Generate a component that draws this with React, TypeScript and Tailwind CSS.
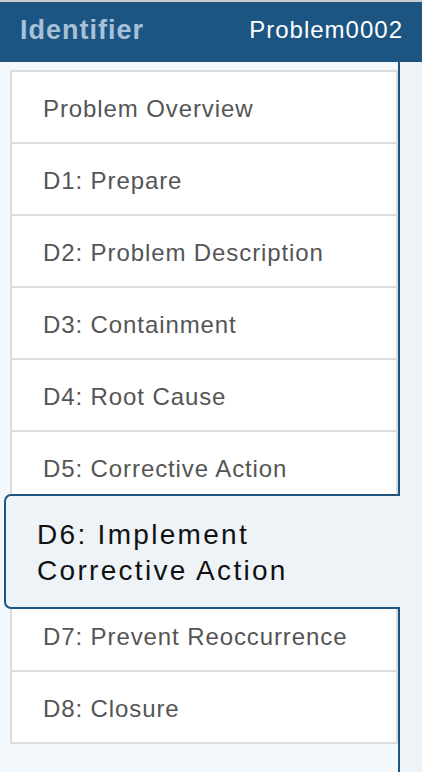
import React from "react";

const rowsTop = [
  "Problem Overview",
  "D1: Prepare",
  "D2: Problem Description",
  "D3: Containment",
  "D4: Root Cause",
  "D5: Corrective Action",
];
const rowsBottom = ["D7: Prevent Reoccurrence", "D8: Closure"];

function Row({ label, first }: { label: string; first?: boolean }) {
  return (
    <div
      className={
        "h-[72px] bg-white border-x-2 border-b-2 border-[#dcdcdc] flex items-center pl-[31px] pt-[3px] text-[24px] tracking-[0.9px] text-[#555555] " +
        (first ? "border-t-2 h-[74px]" : "")
      }
    >
      {label}
    </div>
  );
}

export default function App() {
  return (
    <div
      className="w-[422px] h-[772px] bg-[#eef3f7] overflow-hidden flex flex-col"
      style={{ fontFamily: '"Liberation Sans", Arial, sans-serif' }}
    >
      <div className="h-[62px] shrink-0 bg-[#1c5582] border-t-2 border-[#c9ced3] flex items-center justify-between pl-[20px] pr-[19px] pb-[4px]">
        <span className="text-[27px] font-bold tracking-[1px] text-[#a7c1d9]">
          Identifier
        </span>
        <span className="text-[24px] text-white tracking-[1px]">Problem0002</span>
      </div>
      <div className="flex-1 flex">
        <div className="w-[400px] bg-[#f2f8fc] border-r-2 border-[#1d5580] pt-[8px] pl-[10px] flex flex-col">
          {rowsTop.map((r, i) => (
            <Row key={r} label={r} first={i === 0} />
          ))}
          <div className="relative z-10 -mt-[10px] -mb-[9px] -ml-[6px] w-[396px] h-[115px] bg-[#eef3f8] border-l-2 border-y-2 border-[#1d5580] rounded-l-[7px] flex flex-col justify-center pl-[31px] pt-[2px] text-[28px] leading-[36px] tracking-[2.3px] text-[#111111]">
            <span>D6: Implement</span>
            <span>Corrective Action</span>
          </div>
          {rowsBottom.map((r) => (
            <Row key={r} label={r} />
          ))}
        </div>
      </div>
    </div>
  );
}
